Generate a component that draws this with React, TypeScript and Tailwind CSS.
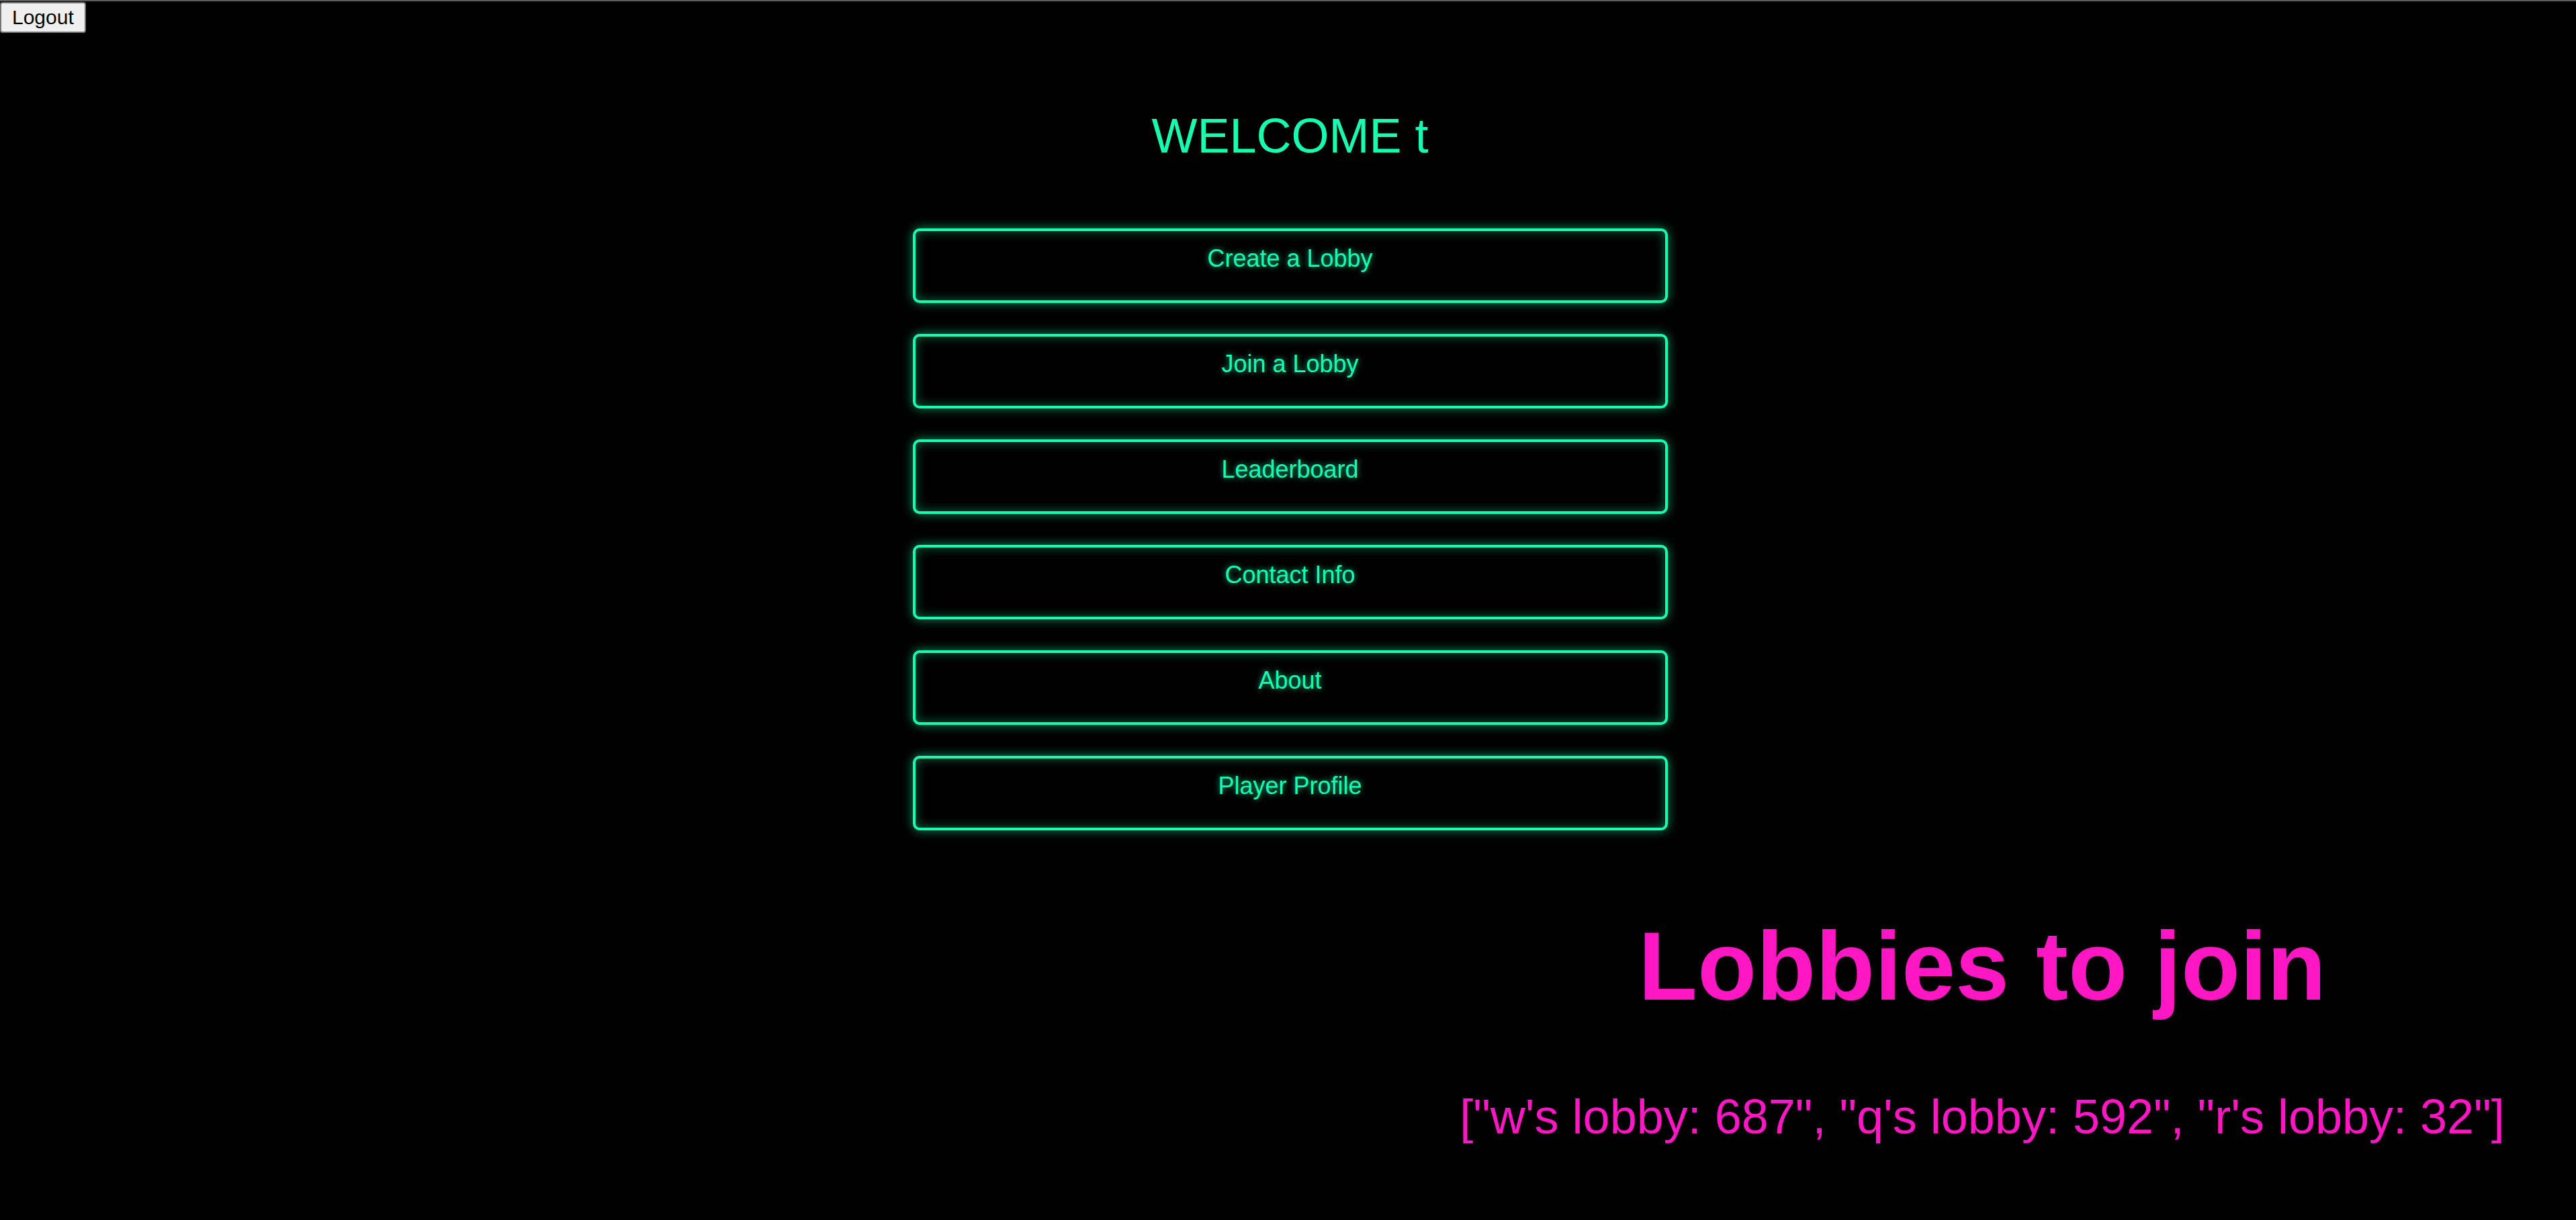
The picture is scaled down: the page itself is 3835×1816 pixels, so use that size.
import React from "react";

const items = [
  "Create a Lobby",
  "Join a Lobby",
  "Leaderboard",
  "Contact Info",
  "About",
  "Player Profile",
];

export default function App() {
  return (
    <div className="min-h-screen bg-black font-['Liberation_Sans',Arial,sans-serif]">
      <div className="h-[2px] bg-[#5e5e5e]" />
      <button className="block mt-[1px] h-[46px] px-[16px] text-[30px] leading-[34px] text-black bg-[#efefef] border-2 border-[#767676] rounded-[4px]">
        Logout
      </button>

      <h1 className="mt-[112px] pl-[6px] text-center text-[72px] leading-[83px] font-normal text-[#18fcb2]">
        WELCOME t
      </h1>

      <div className="mt-[96px] pl-[6px] flex flex-col items-center gap-[46px]">
        {items.map((label) => (
          <button
            key={label}
            className="w-[1124px] h-[111px] flex items-start justify-center pt-[20px] border-4 border-[#18fcb2] rounded-[10px] bg-black text-[36px] leading-[41px] text-[#18fcb2] shadow-[0_0_16px_rgba(24,252,178,0.55),inset_0_0_16px_rgba(24,252,178,0.4)] [text-shadow:0_0_8px_rgba(24,252,178,0.75)]"
          >
            {label}
          </button>
        ))}
      </div>

      <div className="mt-[120px] flex justify-end">
        <div className="w-[1768px] text-center text-[#ff17c4]">
          <h2 className="text-[144px] leading-[166px] font-bold">Lobbies to join</h2>
          <p className="mt-[99px] text-[72px] leading-[83px]">
            ["w's lobby: 687", "q's lobby: 592", "r's lobby: 32"]
          </p>
        </div>
      </div>
    </div>
  );
}
